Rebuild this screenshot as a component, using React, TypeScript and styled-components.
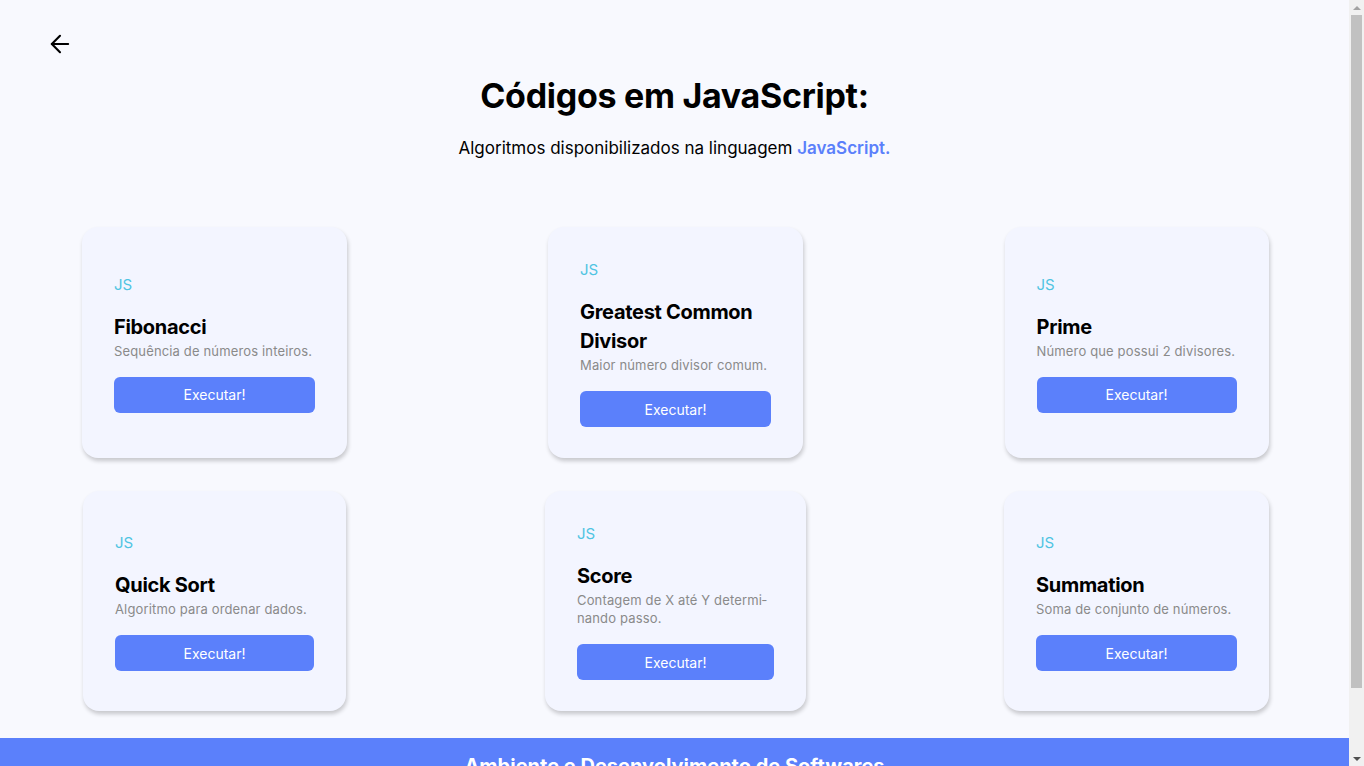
import styled, { createGlobalStyle } from "styled-components";
import { ArrowLeft } from "lucide-react";

interface Algorithm {
  title: string;
  description: string;
  width: number;
}

const algorithms: Algorithm[] = [
  { title: "Fibonacci", description: "Sequência de números inteiros.", width: 201 },
  { title: "Greatest Common Divisor", description: "Maior número divisor comum.", width: 191 },
  { title: "Prime", description: "Número que possui 2 divisores.", width: 200 },
  { title: "Quick Sort", description: "Algoritmo para ordenar dados.", width: 199 },
  { title: "Score", description: "Contagem de X até Y determi\u00adnando passo.", width: 197 },
  { title: "Summation", description: "Soma de conjunto de números.", width: 201 },
];

function App() {
  return (
    <>
      <GlobalStyle />
      <Page>
        <TopBar>
          <BackButton type="button" aria-label="Voltar">
            <ArrowLeft size={28} strokeWidth={1.8} />
          </BackButton>
        </TopBar>

        <Heading>Códigos em JavaScript:</Heading>
        <Subtitle>
          Algoritmos disponibilizados na linguagem <Highlight>JavaScript.</Highlight>
        </Subtitle>

        <CardGrid>
          {algorithms.map((item) => (
            <Card key={item.title}>
              <CardBody $w={item.width}>
                <Lang>JS</Lang>
                <CardTitle>{item.title}</CardTitle>
                <CardText>{item.description}</CardText>
                <RunButton type="button">Executar!</RunButton>
              </CardBody>
            </Card>
          ))}
        </CardGrid>
      </Page>

      <Footer>
        <FooterTitle>Ambiente e Desenvolvimento de Softwares</FooterTitle>
      </Footer>

      <ScrollTrack aria-hidden="true">
        <ScrollArrow $dir="up" />
        <ScrollThumb />
        <ScrollArrow $dir="down" />
      </ScrollTrack>
    </>
  );
}

const GlobalStyle = createGlobalStyle`
  * {
    box-sizing: border-box;
  }

  body {
    width: calc(100% - 15px);
    margin: 0;
    background-color: #f8f9fe;
    font-family: "Inter", "Open Sans", sans-serif;
    color: #000;
  }
`;

const Page = styled.main`
  display: flex;
  flex-direction: column;
  align-items: center;
  padding-bottom: 27px;
`;

const TopBar = styled.div`
  display: flex;
  width: 100%;
  padding: 30px 46px 0;
`;

const BackButton = styled.button`
  display: flex;
  align-items: center;
  justify-content: center;
  padding: 0;
  border: none;
  background: none;
  color: #000;
  cursor: pointer;
`;

const Heading = styled.h1`
  margin: 16px 0 0;
  font-size: 34px;
  font-weight: 700;
  line-height: 43px;
  letter-spacing: -0.3px;
`;

const Subtitle = styled.p`
  margin: 19px 0 0;
  font-size: 17px;
  line-height: 24px;
`;

const Highlight = styled.span`
  color: #5b80fb;
  font-weight: 600;
`;

const CardGrid = styled.section`
  display: grid;
  grid-template-columns: repeat(3, 300px);
  justify-content: center;
  justify-items: center;
  column-gap: 161px;
  row-gap: 33px;
  margin-top: 67px;
  transform: translateX(1px);
`;

const Card = styled.article`
  display: flex;
  flex-direction: column;
  justify-content: center;
  padding: 31px 32px 31px;
  border-radius: 16px;
  background-color: #f3f5ff;
  box-shadow: 1px 3px 4px rgba(0, 0, 0, 0.2);
`;

const CardBody = styled.div<{ $w: number }>`
  display: flex;
  flex-direction: column;
  width: ${(p) => p.$w}px;
`;

const Lang = styled.span`
  font-size: 15px;
  line-height: 24px;
  color: #4fc4e2;
`;

const CardTitle = styled.h2`
  margin: 16px 0 0;
  font-size: 20px;
  font-weight: 700;
  line-height: 29px;
  letter-spacing: -0.3px;
`;

const CardText = styled.p`
  margin: 0;
  font-size: 13px;
  line-height: 18px;
  letter-spacing: 0.15px;
  color: #8a8a8a;
  hyphens: manual;
`;

const RunButton = styled.button`
  height: 36px;
  margin-top: 17px;
  border: none;
  border-radius: 6px;
  background-color: #5b80fb;
  color: #fff;
  font-family: inherit;
  font-size: 14px;
  cursor: pointer;
`;

const Footer = styled.footer`
  display: flex;
  justify-content: center;
  height: 100px;
  padding-top: 13px;
  background-color: #5b80fb;
`;

const FooterTitle = styled.h3`
  margin: 0;
  color: #fff;
  font-size: 20px;
  font-weight: 700;
  line-height: 30px;
`;

const ScrollTrack = styled.div`
  position: fixed;
  top: 0;
  right: 0;
  bottom: 0;
  display: flex;
  flex-direction: column;
  align-items: center;
  width: 15px;
  background-color: #f1f1f1;
`;

const ScrollArrow = styled.div<{ $dir: "up" | "down" }>`
  flex: none;
  display: flex;
  align-items: center;
  justify-content: center;
  width: 15px;
  height: 15px;

  &::before {
    content: "";
    border-left: 4px solid transparent;
    border-right: 4px solid transparent;
    ${(p) =>
      p.$dir === "up"
        ? "border-bottom: 4px solid #a3a3a3;"
        : "border-top: 4px solid #505050;"}
  }
`;

const ScrollThumb = styled.div`
  width: 11px;
  height: 673px;
  background-color: #c1c1c1;
  margin-bottom: auto;
`;

export default App;
